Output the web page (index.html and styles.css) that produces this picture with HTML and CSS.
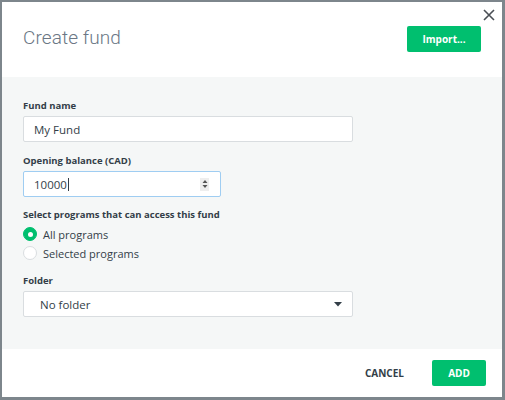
FILE: index.html
```html
<!DOCTYPE html>
<html>
<head>
<meta charset="utf-8">
<link rel="stylesheet" href="styles.css">
</head>
<body>
<div class="dialog">
  <div class="header">
    <h1 class="title">Create fund</h1>
    <button class="btn btn-green btn-import">Import...</button>
    <button class="close" aria-label="Close">
      <svg width="12" height="12" viewBox="0 0 12 12"><path d="M1 1 L11 11 M11 1 L1 11" stroke="#4a4f55" stroke-width="1.6" fill="none"/></svg>
    </button>
  </div>
  <div class="body">
    <div class="label">Fund name</div>
    <div class="field field-wide">My Fund</div>

    <div class="label gap">Opening balance (CAD)</div>
    <div class="field field-num focused">
      <span class="val">10000<span class="caret"></span></span>
      <span class="spin">
        <svg width="6" height="10" viewBox="0 0 6 10"><path d="M3 1 L5.5 4 H0.5 Z M3 9 L5.5 6 H0.5 Z" fill="#555"/></svg>
      </span>
    </div>

    <div class="label gap2 tight">Select programs that can access this fund</div>
    <div class="radios">
      <div class="radio-row"><span class="radio on"></span><span>All programs</span></div>
      <div class="radio-row"><span class="radio"></span><span>Selected programs</span></div>
    </div>

    <div class="label gap3">Folder</div>
    <div class="field field-wide select">
      <span>No folder</span>
      <svg width="8" height="5" viewBox="0 0 8 5"><path d="M0 0 H8 L4 4.5 Z" fill="#333e48"/></svg>
    </div>
  </div>
  <div class="footer">
    <button class="btn btn-text">CANCEL</button>
    <button class="btn btn-green btn-add">ADD</button>
  </div>
</div>
</body>
</html>
```
FILE: styles.css
```css
* { box-sizing: border-box; }
html, body { margin: 0; padding: 0; }
body {
  width: 505px;
  height: 400px;
  background: #7d868c;
  font-family: "Open Sans", "Liberation Sans", sans-serif;
  color: #333e48;
  overflow: hidden;
}
.dialog {
  margin: 2px 3px 3px 2px;
  width: 500px;
  height: 395px;
  background: #fff;
  display: flex;
  flex-direction: column;
}
.header {
  position: relative;
  height: 75px;
  display: flex;
  align-items: center;
  justify-content: space-between;
  padding: 0 21px 0 21px;
}
.title {
  margin: 0;
  font-family: "Roboto", sans-serif;
  font-weight: 300;
  font-size: 19px;
  color: #6b7785;
  letter-spacing: 0.1px;
  position: relative;
  top: -2px;
}
.btn {
  border: none;
  font-family: "Open Sans", sans-serif;
  font-weight: 700;
  cursor: pointer;
}
.btn-green {
  background: #00bf6f;
  color: #fff;
  border-radius: 2px;
}
.btn-import {
  width: 74px;
  height: 26px;
  font-size: 10px;
  padding: 0;
  position: relative;
  top: -1px;
}
.close {
  position: absolute;
  top: 6px;
  right: 6px;
  background: none;
  border: none;
  padding: 0;
  width: 14px;
  height: 14px;
  display: flex;
  align-items: center;
  justify-content: center;
}
.body {
  flex: 1;
  background: #f5f7f7;
  padding: 22px 21px 0 21px;
}
.label {
  font-size: 9.5px;
  font-weight: 700;
  line-height: 14px;
  color: #333e48;
  margin-bottom: 3px;
}
.label.gap { margin-top: 12px; }
.label.gap2 { margin-top: 11px; }
.label.tight { margin-bottom: 5px; }
.label.gap3 { margin-top: 14px; }
.field {
  height: 26px;
  background: #fff;
  border: 1px solid #d9dde0;
  border-radius: 2px;
  font-size: 11.5px;
  display: flex;
  align-items: center;
  padding: 0 10px;
  color: #333e48;
}
.field-wide { width: 330px; }
.field-num {
  width: 198px;
  justify-content: space-between;
  padding-right: 11px;
}
.focused { border-color: #9fcdf2; }
.caret {
  display: inline-block;
  width: 1px;
  height: 13px;
  background: #333e48;
  vertical-align: -2px;
  margin-left: 1px;
}
.spin {
  width: 9px;
  height: 13px;
  background: #eeeeee;
  display: flex;
  align-items: center;
  justify-content: center;
}
.radios {
  display: flex;
  flex-direction: column;
  gap: 5px;
}
.radio-row {
  display: flex;
  align-items: center;
  gap: 6px;
  height: 14px;
  font-size: 11px;
  color: #333e48;
}
.radio {
  width: 14px;
  height: 14px;
  border-radius: 50%;
  background: #fff;
  border: 1px solid #d9dde0;
  display: flex;
  align-items: center;
  justify-content: center;
}
.radio.on {
  background: #00bf6f;
  border-color: #00bf6f;
}
.radio.on::after {
  content: "";
  width: 5px;
  height: 5px;
  border-radius: 50%;
  background: #fff;
}
.select {
  justify-content: space-between;
  padding-left: 16px;
  padding-right: 10px;
}
.footer {
  height: 48px;
  display: flex;
  align-items: center;
  justify-content: flex-end;
  padding-right: 16px;
  gap: 14px;
}
.btn-text {
  background: none;
  color: #333e48;
  font-size: 10px;
  padding: 0 14px;
  height: 26px;
}
.btn-add {
  width: 54px;
  height: 26px;
  font-size: 10px;
  padding: 0;
}
```
